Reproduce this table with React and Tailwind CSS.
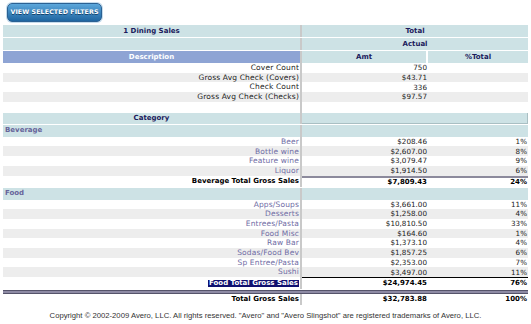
import React from 'react'

// Dining sales report: header bands, summary counts, category breakdown

const summary = [
  { label: 'Cover Count', amt: '750' },
  { label: 'Gross Avg Check (Covers)', amt: '$43.71' },
  { label: 'Check Count', amt: '336' },
  { label: 'Gross Avg Check (Checks)', amt: '$97.57' },
]

const beverage = [
  { label: 'Beer', amt: '$208.46', pct: '1%' },
  { label: 'Bottle wine', amt: '$2,607.00', pct: '8%' },
  { label: 'Feature wine', amt: '$3,079.47', pct: '9%' },
  { label: 'Liquor', amt: '$1,914.50', pct: '6%' },
]

const food = [
  { label: 'Apps/Soups', amt: '$3,661.00', pct: '11%' },
  { label: 'Desserts', amt: '$1,258.00', pct: '4%' },
  { label: 'Entrees/Pasta', amt: '$10,810.50', pct: '33%' },
  { label: 'Food Misc', amt: '$164.60', pct: '1%' },
  { label: 'Raw Bar', amt: '$1,373.10', pct: '4%' },
  { label: 'Sodas/Food Bev', amt: '$1,857.25', pct: '6%' },
  { label: 'Sp Entree/Pasta', amt: '$2,353.00', pct: '7%' },
  { label: 'Sushi', amt: '$3,497.00', pct: '11%' },
]

function Sep() {
  return <div className="w-[2px] shrink-0 self-stretch bg-[#c9c9c9]" />
}

function ItemRow({ row, i, purple }) {
  const bg = i % 2 === 0 ? 'bg-white' : 'bg-[#ededed]'
  return (
    <div className={`flex h-[9.7px] items-center ${bg}`}>
      <div className={`w-[297px] pr-px text-right text-[7.5px] tracking-[0.15px] ${purple ? 'text-[#6f6ca4]' : 'text-[#222]'}`}>
        {row.label}
      </div>
      <Sep />
      <div className="w-[126px] pr-px text-right text-[7.2px] text-[#222]">{row.amt}</div>
      <div className="w-[100px] pr-px text-right text-[7.2px] text-[#222]">{row.pct || ''}</div>
    </div>
  )
}

export default function App() {
  return (
    <div className="w-[531px] h-[324px] bg-white overflow-hidden font-['DejaVu_Sans',sans-serif] text-[7px] leading-none">
      <div className="h-[25px] pl-[7px] pt-[3px]">
        <button className="h-[19px] w-[95px] rounded-[5px] border border-[#2b6193] bg-gradient-to-b from-[#5ba7db] to-[#1f66a1] shadow-[0_0_0_1px_#c5dcec] text-white font-bold text-[6.3px] tracking-[0.1px] [text-shadow:0_1px_0_#15456f]">
          VIEW SELECTED FILTERS
        </button>
      </div>

      <div className="ml-[3px] w-[525px]">
        {/* header bands */}
        <div className="flex h-[12px] items-center bg-[#cde2e5] font-bold text-[#1b1b5c]">
          <div className="w-[297px] text-center">1 Dining Sales</div>
          <Sep />
          <div className="w-[226px] text-center">Total</div>
        </div>
        <div className="mt-px flex h-[12px] items-center bg-[#cde2e5] font-bold text-[#1b1b5c]">
          <div className="w-[297px]" />
          <Sep />
          <div className="w-[226px] text-center">Actual</div>
        </div>
        <div className="mt-px flex h-[12px] font-bold text-[#1b1b5c]">
          <div className="flex w-[297px] items-center justify-center bg-[#8ea4d4] text-white">Description</div>
          <Sep />
          <div className="flex w-[126px] items-center justify-center border-r-2 border-white bg-[#cde2e5]">Amt</div>
          <div className="flex w-[100px] items-center justify-center bg-[#cde2e5]">%Total</div>
        </div>

        {summary.map((r, i) => (
          <ItemRow key={r.label} row={r} i={i} />
        ))}

        <div className="flex h-[11px]">
          <div className="w-[297px]" />
          <Sep />
        </div>

        {/* category section */}
        <div className="flex h-[11px] font-bold text-[#1b1b5c]">
          <div className="flex w-[297px] items-center justify-center bg-[#cde2e5]">Category</div>
          <Sep />
          <div className="w-[226px] border-b border-r border-[#a9bfc3] bg-[#cde2e5]" />
        </div>
        <div className="mt-px flex h-[12px] items-center bg-[#cde2e5] font-bold text-[#66649a]">
          <div className="w-[297px] pl-[2px]">Beverage</div>
          <Sep />
          <div className="w-[226px]" />
        </div>
        {beverage.map((r, i) => (
          <ItemRow key={r.label} row={r} i={i} purple />
        ))}
        <div className="flex h-[11px] font-bold text-black">
          <div className="flex w-[297px] items-center justify-end pr-px">Beverage Total Gross Sales</div>
          <Sep />
          <div className="flex w-[126px] items-center justify-end border-t-2 border-[#8c8a9c] pr-px">$7,809.43</div>
          <div className="flex w-[100px] items-center justify-end border-t-2 border-[#8c8a9c] pr-px">24%</div>
        </div>

        <div className="mt-px flex h-[12px] items-center bg-[#cde2e5] font-bold text-[#66649a]">
          <div className="w-[297px] pl-[2px]">Food</div>
          <Sep />
          <div className="w-[226px]" />
        </div>
        {food.map((r, i) => (
          <ItemRow key={r.label} row={r} i={i} purple />
        ))}
        <div className="flex h-[12px] font-bold">
          <div className="flex w-[297px] items-center justify-end pr-px">
            <span className="bg-[#101070] px-px text-white">Food Total Gross Sales</span>
          </div>
          <Sep />
          <div className="flex w-[126px] items-center justify-end border-t border-black pr-px">$24,974.45</div>
          <div className="flex w-[100px] items-center justify-end border-t border-black pr-px">76%</div>
        </div>
        <div className="mt-px h-[4px] border-y border-[#55536a] bg-[#8d8aa4]" />
        <div className="flex h-[11px] font-bold text-black">
          <div className="flex w-[297px] items-center justify-end pr-px">Total Gross Sales</div>
          <Sep />
          <div className="flex w-[126px] items-center justify-end pr-px">$32,783.88</div>
          <div className="flex w-[100px] items-center justify-end pr-px">100%</div>
        </div>
      </div>

      <div className="mt-[7px] text-center font-['Liberation_Sans',sans-serif] text-[7.7px] text-[#333]">
        Copyright © 2002-2009 Avero, LLC. All rights reserved. "Avero" and "Avero Slingshot" are registered trademarks of Avero, LLC.
      </div>
    </div>
  )
}
